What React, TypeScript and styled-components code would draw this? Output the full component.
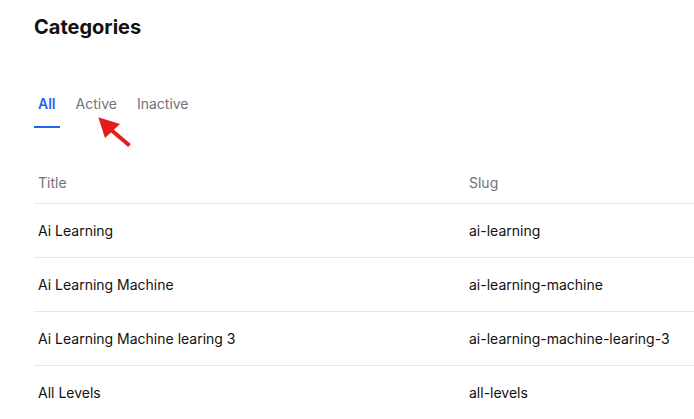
import React from 'react';
import styled, { createGlobalStyle } from 'styled-components';

const GlobalStyle = createGlobalStyle`
  html, body {
    margin: 0;
    padding: 0;
    background: #ffffff;
    font-family: Inter, "Noto Sans", sans-serif;
    overflow: hidden;
  }
`;

const Page = styled('div')`
  padding: 15px 0 0 34px;
  width: 660px;
  overflow: hidden;
`;

const Heading = styled('h1')`
  color: #111111;
  font-size: 20px;
  font-weight: 700;
  line-height: 24px;
  margin: 0;
`;

const Tabs = styled('div')`
  display: flex;
  gap: 12px;
  margin-top: 55px;
  position: relative;
`;

const Tab = styled('button')<{ active?: boolean }>`
  background: transparent;
  border: 0 none;
  border-bottom: 2px solid ${props => (props.active ? '#2563eb' : 'transparent')};
  color: ${props => (props.active ? '#2563eb' : '#71717a')};
  cursor: pointer;
  font-family: inherit;
  font-size: 14px;
  font-weight: ${props => (props.active ? 600 : 400)};
  line-height: 20px;
  padding: 0 4px 12px;
`;

// red pointer drawn over the tabs
const Arrow = styled('svg')`
  left: 60px;
  position: absolute;
  top: 20px;
`;

const Table = styled('table')`
  border-collapse: collapse;
  margin-top: 35px;
  width: 900px;
`;

const HeadCell = styled('th')<{ width?: number }>`
  border-bottom: 1px solid #e5e7eb;
  color: #71717a;
  font-size: 14px;
  font-weight: 400;
  height: 38px;
  padding: 0 4px 2px;
  text-align: left;
  width: ${props => (props.width ? `${props.width}px` : 'auto')};
`;

const Cell = styled('td')`
  border-bottom: 1px solid #e5e7eb;
  color: #111111;
  font-size: 14px;
  height: 53px;
  padding: 0 4px;
`;

const rows = [
  { title: 'Ai Learning', slug: 'ai-learning' },
  { title: 'Ai Learning Machine', slug: 'ai-learning-machine' },
  { title: 'Ai Learning Machine learing 3', slug: 'ai-learning-machine-learing-3' },
  { title: 'All Levels', slug: 'all-levels' },
];

export default function App() {
  return (
    <>
      <GlobalStyle />
      <Page>
        <Heading>Categories</Heading>
        <Tabs>
          <Tab active>All</Tab>
          <Tab>Active</Tab>
          <Tab>Inactive</Tab>
          <Arrow width="40" height="36" viewBox="0 0 40 36">
            <line x1="35.5" y1="31.5" x2="16" y2="15" stroke="#e51c1c" strokeWidth="4" strokeLinecap="butt" />
            <polygon points="4.3,3.3 26,10 11,24" fill="#e51c1c" />
          </Arrow>
        </Tabs>
        <Table>
          <thead>
            <tr>
              <HeadCell width={423}>Title</HeadCell>
              <HeadCell>Slug</HeadCell>
            </tr>
          </thead>
          <tbody>
            {rows.map(r => (
              <tr key={r.slug}>
                <Cell>{r.title}</Cell>
                <Cell>{r.slug}</Cell>
              </tr>
            ))}
          </tbody>
        </Table>
      </Page>
    </>
  );
}
